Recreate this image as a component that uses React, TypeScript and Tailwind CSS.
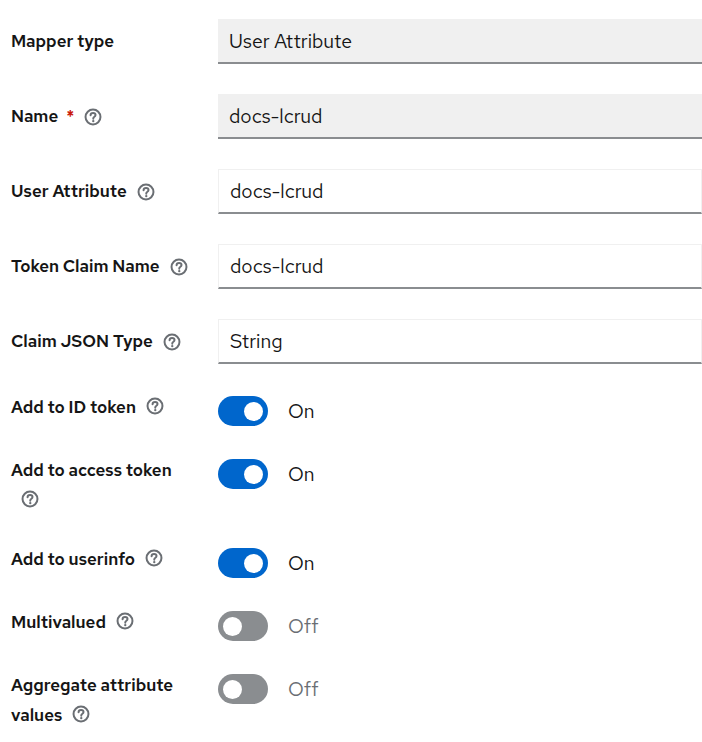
import React from "react";

const HelpIcon = () => (
  <svg
    viewBox="0 0 20 20"
    className="inline-block h-[18px] w-[18px] shrink-0 text-[#6a6e73]"
    fill="none"
  >
    <circle cx="10" cy="10" r="8.3" stroke="currentColor" strokeWidth="2.2" />
    <path
      d="M7.3 8.1c0-1.6 1.2-2.6 2.8-2.6 1.6 0 2.7 1 2.7 2.4 0 1.1-.7 1.6-1.5 2.1-.6.4-1 .8-1 1.6v.3"
      stroke="currentColor"
      strokeWidth="2.2"
      strokeLinecap="round"
    />
    <circle cx="10.3" cy="14.5" r="1.3" fill="currentColor" />
  </svg>
);

interface TextRowProps {
  label: string;
  value: string;
  readOnly?: boolean;
  required?: boolean;
  help?: boolean;
}

const TextRow: React.FC<TextRowProps> = ({ label, value, readOnly, required, help }) => (
  <div className="flex items-center">
    <div className="flex w-[218px] items-center pl-[11px] text-[17px] font-semibold text-[#151515]">
      <span>{label}</span>
      {required && <span className="ml-[8px] text-[#c9190b]">*</span>}
      {help && (
        <span className="ml-[10px] flex items-center">
          <HelpIcon />
        </span>
      )}
    </div>
    <div
      className={`flex h-[45px] flex-1 items-center border-b-2 border-b-[#8a8d90] pl-[11px] pt-[2px] text-[19.5px] text-[#151515] ${
        readOnly ? "bg-[#f0f0f0]" : "border-x border-t border-x-[#f0f0f0] border-t-[#f0f0f0] bg-white"
      }`}
    >
      {value}
    </div>
  </div>
);

interface SwitchRowProps {
  label: React.ReactNode;
  on: boolean;
}

const SwitchRow: React.FC<SwitchRowProps> = ({ label, on }) => (
  <div className="flex items-start">
    <div className="w-[218px] shrink-0 pl-[11px] pr-[24px] text-[17px] font-semibold leading-[30px] text-[#151515]">
      {label}
    </div>
    <div className="flex h-[34px] items-center gap-[20px] pt-[4px]">
      <div
        className={`flex h-[30px] w-[50px] items-center rounded-full px-[5px] ${
          on ? "justify-end bg-[#0066cc]" : "justify-start bg-[#8a8d90]"
        }`}
      >
        <div className="h-[19px] w-[19px] rounded-full bg-white" />
      </div>
      <span className={`pt-[1px] text-[19.5px] ${on ? "text-[#151515]" : "text-[#6a6e73]"}`}>
        {on ? "On" : "Off"}
      </span>
    </div>
  </div>
);

const Help = () => (
  <span className="ml-[10px] inline-flex translate-y-[2px] align-baseline">
    <HelpIcon />
  </span>
);

export default function App() {
  return (
    <div
      className="min-h-[742px] w-[702px] bg-white pt-[19px]"
      style={{ fontFamily: '"Red Hat Text", Inter, "Open Sans", sans-serif' }}
    >
      <div className="flex flex-col gap-[30px]">
        <TextRow label="Mapper type" value="User Attribute" readOnly />
        <TextRow label="Name" value="docs-lcrud" readOnly required help />
        <TextRow label="User Attribute" value="docs-lcrud" help />
        <TextRow label="Token Claim Name" value="docs-lcrud" help />
        <TextRow label="Claim JSON Type" value="String" help />
      </div>
      <div className="mt-[28px] flex flex-col gap-[29px]">
        <SwitchRow label={<>Add to ID token<Help /></>} on />
        <SwitchRow label={<>Add to access token <Help /></>} on />
        <SwitchRow label={<>Add to userinfo<Help /></>} on />
        <SwitchRow label={<>Multivalued<Help /></>} on={false} />
        <SwitchRow label={<>Aggregate attribute values<Help /></>} on={false} />
      </div>
    </div>
  );
}
